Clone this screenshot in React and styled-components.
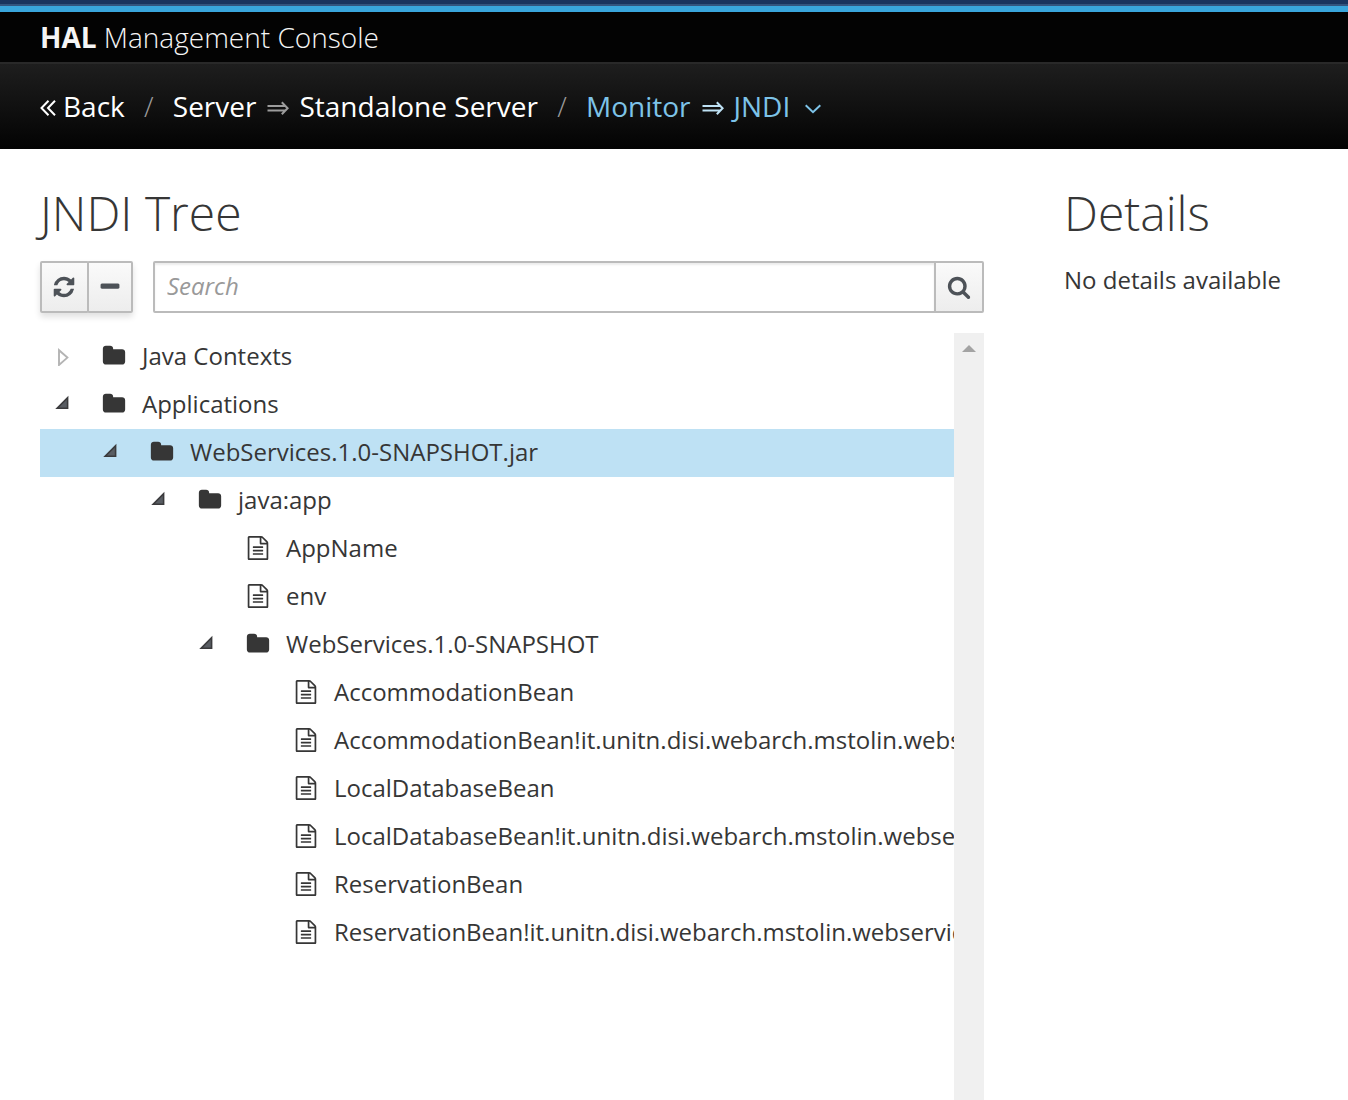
import React, { useState } from "react";
import styled, { createGlobalStyle } from "styled-components";

const GlobalStyle = createGlobalStyle`
  *, *::before, *::after { box-sizing: border-box; }
  html, body { margin: 0; padding: 0; }
  body {
    background: #fff;
    color: #363636;
    font-family: "Open Sans", "Noto Sans", sans-serif;
    font-size: 24px;
    line-height: 48px;
    text-rendering: optimizeLegibility;
    font-kerning: normal;
  }
  button, input { font: inherit; color: inherit; }
`;

const Page = styled.div`
  display: flex;
  flex-direction: column;
  height: 100vh;
  overflow: hidden;
`;

const TopEdge = styled.div`
  flex: none;
  height: 6px;
  background: #1a345e;
  border-bottom: 2px solid #33547e;
`;

const Masthead = styled.header`
  flex: none;
  padding: 0 40px;
  border-top: 6px solid #39a5dc;
  border-bottom: 2px solid #292929;
  background: #030303;
  color: #f5f5f5;
  font-size: 28px;
  font-weight: 300;
  line-height: 50px;

  strong { font-weight: 700; }
`;

const Crumbs = styled.nav`
  flex: none;
  padding: 18px 40px 19px;
  background: linear-gradient(to bottom, #1e1e1e 0%, #030303 100%);
  color: #fff;
  font-size: 28px;
`;

const CrumbList = styled.ol`
  display: flex;
  align-items: center;
  margin: 0;
  padding: 0;
  list-style: none;
`;

const Crumb = styled.li`
  display: flex;
  align-items: center;

  & + &::before {
    content: "/";
    width: 48px;
    color: #9c9c9c;
    font-weight: 300;
    text-align: center;
  }
`;

const CrumbLink = styled.a`
  display: flex;
  align-items: center;
  gap: 7px;
  color: ${(p) => (p.$accent ? "#7dc3e8" : "#fff")};
  text-decoration: none;
`;

const CrumbGlyph = styled.svg`
  flex: none;
  margin-top: 4px;
  fill: none;
  stroke: currentColor;
  stroke-width: 2;
`;

const Arrow = styled(CrumbGlyph)`
  margin-left: 11px;
  margin-right: 10px;
  color: ${(p) => (p.$accent ? "#bee1f4" : "#9c9c9c")};
`;

const MenuButton = styled.button`
  display: flex;
  align-items: center;
  gap: 14px;
  padding: 0;
  border: 0;
  background: none;
  color: #7dc3e8;
`;

const Main = styled.main`
  flex: 1;
  min-height: 0;
  display: grid;
  grid-template-columns: minmax(0, 1fr) 244px;
  column-gap: 80px;
  padding: 32px 40px 0;
`;

const Column = styled.section`
  display: flex;
  flex-direction: column;
  min-height: 0;
`;

const Title = styled.h1`
  margin: 0 0 16px;
  font-size: 48px;
  font-weight: 300;
  line-height: 64px;
`;

const Note = styled.p`
  margin: 0;
  line-height: 38px;
  white-space: nowrap;
`;

const Toolbar = styled.div`
  display: flex;
  gap: 20px;
`;

const ButtonGroup = styled.div`
  display: flex;
  border-radius: 2px;
  box-shadow: 0 4px 6px rgba(3, 3, 3, 0.12);
`;

const ToolButton = styled.button`
  display: flex;
  align-items: center;
  justify-content: center;
  width: ${(p) => p.$width}px;
  height: 52px;
  padding: 0 1px 1px 0;
  border: 2px solid #bbb;
  border-radius: 2px;
  background: linear-gradient(to bottom, #fafafa 0%, #ededed 100%);
  color: #4d5258;

  & + &, input + & { margin-left: -2px; }
`;

const SearchForm = styled.form`
  flex: 1;
  display: flex;
  min-width: 0;
`;

const SearchInput = styled.input`
  flex: 1;
  min-width: 0;
  height: 52px;
  padding: 0 12px 3px;
  border: 2px solid #bbb;
  border-radius: 2px 0 0 2px;
  background: #fff;
  box-shadow: inset 0 2px 2px rgba(3, 3, 3, 0.075);
  outline: 0;

  &::placeholder { color: #999; font-style: italic; opacity: 1; }
`;

const TreePanel = styled.div`
  flex: 1;
  display: flex;
  min-height: 0;
  margin-top: 20px;
`;

const TreeView = styled.ul`
  flex: 1;
  min-width: 0;
  margin: 0;
  padding: 0;
  overflow: hidden;
  list-style: none;
`;

const Branch = styled.ul`
  margin: 0;
  padding: 0;
  list-style: none;
`;

const Row = styled.div`
  display: flex;
  align-items: center;
  padding-bottom: 2px;
  padding-left: ${(p) => p.$level * 48}px;
  background: ${(p) => (p.$selected ? "#bee1f4" : "transparent")};
  line-height: 46px;
  white-space: nowrap;
`;

const ToggleCell = styled.span`
  flex: none;
  display: flex;
  width: 62px;
  padding-left: 14px;
`;

const Toggle = styled.button`
  display: flex;
  padding: 0;
  border: 0;
  background: none;
`;

const Label = styled.span`
  margin-left: 16px;
`;

const ScrollTrack = styled.div`
  flex: none;
  display: flex;
  justify-content: center;
  width: 30px;
  padding-top: 12px;
  background: #f0f0f0;
`;

const Glyph = styled.svg`
  flex: none;
  display: block;
  width: 24px;
  height: 24px;
  fill: currentColor;
`;

const paths = {
  refresh:
    "M1639 1056q0 5-1 7-64 268-268 434.5t-478 166.5q-146 0-282.5-55t-243.5-157l-129 129q-19 19-45 19t-45-19-19-45v-448q0-26 19-45t45-19h448q26 0 45 19t19 45-19 45l-137 137q71 66 161 102t187 36q134 0 250-65t186-179q11-17 53-117 8-23 30-23h192q13 0 22.5 9.5t9.5 22.5zm25-800v448q0 26-19 45t-45 19h-448q-26 0-45-19t-19-45 19-45l138-138q-148-137-349-137-134 0-250 65t-186 179q-11 17-53 117-8 23-30 23h-199q-13 0-22.5-9.5t-9.5-22.5v-7q65-268 270-434.5t480-166.5q146 0 284 55.5t245 156.5l130-129q19-19 45-19t45 19 19 45z",
  minus:
    "M1600 736v192q0 40-28 68t-68 28h-1216q-40 0-68-28t-28-68v-192q0-40 28-68t68-28h1216q40 0 68 28t28 68z",
  search:
    "M1216 832q0-185-131.5-316.5t-316.5-131.5-316.5 131.5-131.5 316.5 131.5 316.5 316.5 131.5 316.5-131.5 131.5-316.5zm512 832q0 52-38 90t-90 38q-54 0-90-38l-343-342q-179 124-399 124-143 0-273.5-55.5t-225-150-150-225-55.5-273.5 55.5-273.5 150-225 225-150 273.5-55.5 273.5 55.5 225 150 150 225 55.5 273.5q0 220-124 399l343 343q37 37 37 90z",
  folder:
    "M1728 608v704q0 92-66 158t-158 66h-1216q-92 0-158-66t-66-158v-960q0-92 66-158t158-66h320q92 0 158 66t66 158v32h672q92 0 158 66t66 158z",
  file:
    "M1596 380q28 28 48 76t20 88v1152q0 40-28 68t-68 28h-1344q-40 0-68-28t-28-68v-1600q0-40 28-68t68-28h896q40 0 88 20t76 48zm-444-244v376h376q-10-29-22-41l-313-313q-12-12-41-22zm384 1528v-1024h-416q-40 0-68-28t-28-68v-416h-768v1536h1280zm-1024-864q0-14 9-23t23-9h704q14 0 23 9t9 23v64q0 14-9 23t-23 9h-704q-14 0-23-9t-9-23v-64zm736 224q14 0 23 9t9 23v64q0 14-9 23t-23 9h-704q-14 0-23-9t-9-23v-64q0-14 9-23t23-9h704zm0 256q14 0 23 9t9 23v64q0 14-9 23t-23 9h-704q-14 0-23-9t-9-23v-64q0-14 9-23t23-9h704z",
};

const Icon = ({ name }) => (
  <Glyph viewBox="0 0 1792 1792" aria-hidden="true">
    <path d={paths[name]} />
  </Glyph>
);

const DoubleArrow = ({ accent }) => (
  <Arrow $accent={accent} width="22" height="14" viewBox="0 0 22 14" aria-hidden="true">
    <path d="M0.5 5H18.5M0.5 9.4H18.5M14.8 1.2L20.6 7.2L14.8 13.2" />
  </Arrow>
);

const BackIcon = () => (
  <CrumbGlyph width="16" height="18" viewBox="0 0 16 18" aria-hidden="true">
    <path d="M8.5 1.8L1.5 9L8.5 16.2M15 1.8L8 9L15 16.2" />
  </CrumbGlyph>
);

const ChevronDown = () => (
  <CrumbGlyph width="18" height="12" viewBox="0 0 18 12" aria-hidden="true">
    <path d="M1.7 3.2L9 10.2L16.3 3.2" />
  </CrumbGlyph>
);

const ToggleIcon = ({ open }) => (
  <svg width="16" height="20" viewBox="0 0 16 20" aria-hidden="true">
    {open ? (
      <path d="M3.2 14.2H13.6V3.8Z" fill="#595d63" stroke="#3a3a3c" strokeWidth="1.6" />
    ) : (
      <path d="M5 4.2V19L13.4 11.6Z" fill="#fff" stroke="#b4b4b4" strokeWidth="1.9" />
    )}
  </svg>
);

const tree = [
  { name: "Java Contexts", children: [] },
  {
    name: "Applications",
    open: true,
    children: [
      {
        name: "WebServices.1.0-SNAPSHOT.jar",
        open: true,
        children: [
          {
            name: "java:app",
            open: true,
            children: [
              { name: "AppName" },
              { name: "env" },
              {
                name: "WebServices.1.0-SNAPSHOT",
                open: true,
                children: [
                  { name: "AccommodationBean" },
                  { name: "AccommodationBean!it.unitn.disi.webarch.mstolin.webservices" },
                  { name: "LocalDatabaseBean" },
                  { name: "LocalDatabaseBean!it.unitn.disi.webarch.mstolin.webservices" },
                  { name: "ReservationBean" },
                  { name: "ReservationBean!it.unitn.disi.webarch.mstolin.webservices" },
                ],
              },
            ],
          },
        ],
      },
    ],
  },
];

function Node({ node, level, selected, onSelect }) {
  const [open, setOpen] = useState(Boolean(node.open));
  const isFolder = Boolean(node.children);
  return (
    <li role="treeitem" aria-expanded={isFolder ? open : undefined} aria-selected={selected === node.name}>
      <Row $level={level} $selected={selected === node.name} onClick={() => onSelect(node.name)}>
        <ToggleCell>
          {isFolder && (
            <Toggle type="button" aria-label={`Toggle ${node.name}`} onClick={() => setOpen(!open)}>
              <ToggleIcon open={open} />
            </Toggle>
          )}
        </ToggleCell>
        <Icon name={isFolder ? "folder" : "file"} />
        <Label>{node.name}</Label>
      </Row>
      {isFolder && open && (
        <Branch role="group">
          {node.children.map((child) => (
            <Node key={child.name} node={child} level={level + 1} selected={selected} onSelect={onSelect} />
          ))}
        </Branch>
      )}
    </li>
  );
}

export default function App() {
  const [selected, setSelected] = useState("WebServices.1.0-SNAPSHOT.jar");
  return (
    <Page>
      <GlobalStyle />
      <TopEdge />
      <Masthead>
        <strong>HAL</strong> Management Console
      </Masthead>
      <Crumbs aria-label="Breadcrumb">
        <CrumbList>
          <Crumb>
            <CrumbLink href="#back">
              <BackIcon />
              Back
            </CrumbLink>
          </Crumb>
          <Crumb>
            <CrumbLink href="#server">Server</CrumbLink>
            <DoubleArrow />
            <span>Standalone Server</span>
          </Crumb>
          <Crumb>
            <CrumbLink href="#monitor" $accent>Monitor</CrumbLink>
            <DoubleArrow accent />
            <MenuButton type="button">
              JNDI
              <ChevronDown />
            </MenuButton>
          </Crumb>
        </CrumbList>
      </Crumbs>
      <Main>
        <Column>
          <Title>JNDI Tree</Title>
          <Toolbar>
            <ButtonGroup>
              <ToolButton type="button" $width={49} aria-label="Refresh">
                <Icon name="refresh" />
              </ToolButton>
              <ToolButton type="button" $width={46} aria-label="Collapse all">
                <Icon name="minus" />
              </ToolButton>
            </ButtonGroup>
            <SearchForm role="search" onSubmit={(e) => e.preventDefault()}>
              <SearchInput type="text" placeholder="Search" aria-label="Search" />
              <ToolButton type="submit" $width={50} aria-label="Run search">
                <Icon name="search" />
              </ToolButton>
            </SearchForm>
          </Toolbar>
          <TreePanel>
            <TreeView role="tree" aria-label="JNDI Tree">
              {tree.map((node) => (
                <Node key={node.name} node={node} level={0} selected={selected} onSelect={setSelected} />
              ))}
            </TreeView>
            <ScrollTrack aria-hidden="true">
              <svg width="14" height="7" viewBox="0 0 14 7">
                <path d="M0 7L7 0L14 7Z" fill="#a3a3a3" />
              </svg>
            </ScrollTrack>
          </TreePanel>
        </Column>
        <Column>
          <Title as="h2">Details</Title>
          <Note>No details available</Note>
        </Column>
      </Main>
    </Page>
  );
}
